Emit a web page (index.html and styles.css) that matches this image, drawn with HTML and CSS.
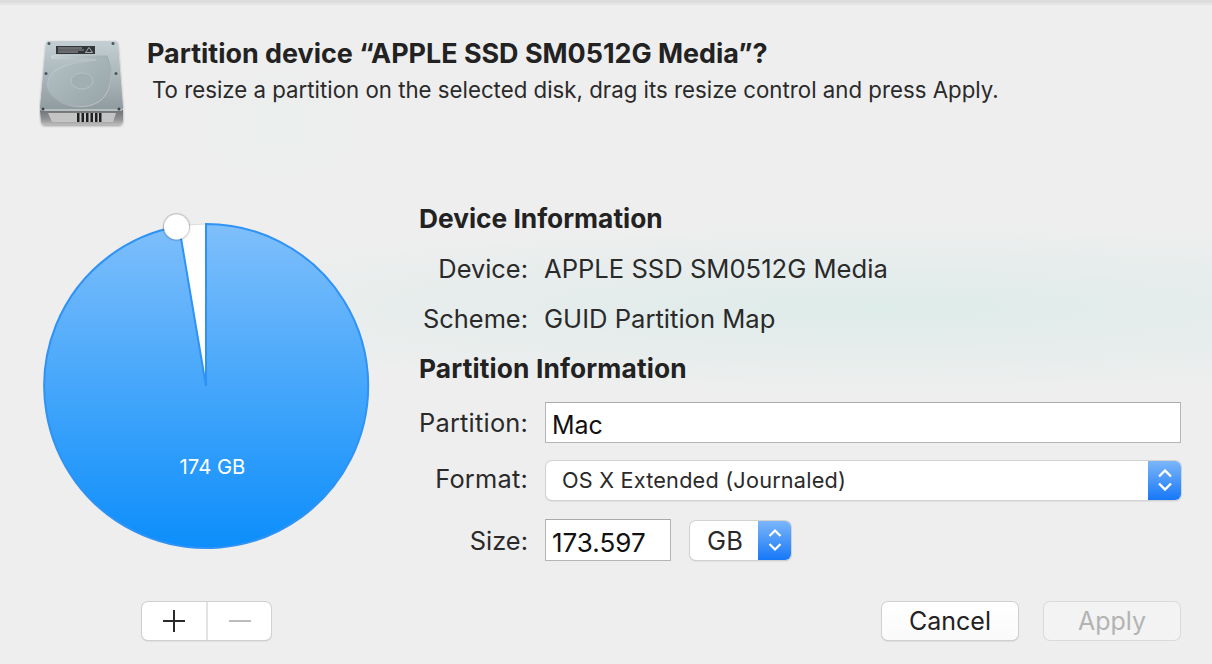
FILE: index.html
```html
<!DOCTYPE html>
<html lang="en">
<head>
<meta charset="utf-8">
<title>Partition device</title>
<link rel="stylesheet" href="styles.css">
</head>
<body>
<div class="dialog">
  <header class="head">
    <svg class="disk" width="90" height="92" viewBox="39 40 90 92">
      <defs>
        <linearGradient id="dtop" x1="0" y1="0" x2="0" y2="1">
          <stop offset="0" stop-color="#c3cfd3"/><stop offset="0.5" stop-color="#a9b6ba"/><stop offset="1" stop-color="#8f9a9e"/>
        </linearGradient>
        <linearGradient id="dfront" x1="0" y1="0" x2="0" y2="1">
          <stop offset="0" stop-color="#6f7274"/><stop offset="0.6" stop-color="#8f9192"/><stop offset="1" stop-color="#bdbdbd"/>
        </linearGradient>
        <linearGradient id="dplat" x1="0" y1="0" x2="1" y2="1">
          <stop offset="0" stop-color="#b4c1c5"/><stop offset="1" stop-color="#96a3a7"/>
        </linearGradient>
        <linearGradient id="dring" x1="0" y1="0" x2="1" y2="1">
          <stop offset="0" stop-color="#dfe6e7"/><stop offset="0.5" stop-color="#98a5a9"/><stop offset="1" stop-color="#d9cfcf"/>
        </linearGradient>
        <filter id="dshadow" x="-10%" y="-10%" width="120%" height="120%">
          <feDropShadow dx="0" dy="1" stdDeviation="0.800" flood-color="#000" flood-opacity="0.350"/>
        </filter>
      </defs>
      <g filter="url(#dshadow)">
        <path d="M40 110 L41 121 Q41.500 125 45 125 L119 125 Q122.500 125 123 121 L123 110 Z" fill="url(#dfront)"/>
        <path d="M48 113 L116 113 L113 122 L52 122 Z" fill="#c4c4c4"/>
        <path d="M46 43 Q46.500 41 49 41 L115 41 Q117.500 41 118 43 L123 107 Q123 111 119 111 L44 111 Q40 111 40 107 Z" fill="url(#dtop)"/>
      </g>
      <path d="M41 110 H122" stroke="#dde2e3" stroke-width="1"/>
      <path d="M107 56 L52 56 L52 58 L93 58 Q100 59 96 62 C80 62 66 64 56 70 C44 78 45 94 60 102 C76 110 98 108 106 94 C111 86 111 78 111 68 Z" fill="url(#dplat)" stroke="url(#dring)" stroke-width="1"/>
      <ellipse cx="82" cy="81" rx="11" ry="8" fill="#a1afb3" stroke="#b9c4c7" stroke-width="0.800"/>
      <rect x="56" y="46" width="39" height="8" fill="#33363a"/>
      <rect x="58" y="47.500" width="24" height="1" fill="#a2a4a6"/>
      <rect x="58" y="49.500" width="26" height="1" fill="#8e9092"/>
      <rect x="58" y="51.500" width="20" height="1" fill="#a2a4a6"/>
      <path d="M89 47.500 L92.500 52.500 L85.500 52.500 Z" fill="none" stroke="#c9cbcc" stroke-width="0.800"/>
      <circle cx="49" cy="43.500" r="1.500" fill="#4a565b"/>
      <circle cx="113" cy="43.500" r="1.500" fill="#4a565b"/>
      <circle cx="46" cy="73.500" r="1.500" fill="#4a565b"/>
      <circle cx="116" cy="73.500" r="1.500" fill="#4a565b"/>
      <circle cx="43" cy="109" r="1.500" fill="#39444a"/>
      <circle cx="119" cy="109" r="1.500" fill="#39444a"/>
      <g fill="#1f2022">
        <rect x="77" y="113" width="2.500" height="9"/><rect x="81.500" y="113" width="2.500" height="9"/><rect x="86" y="113" width="2.500" height="9"/><rect x="90.500" y="113" width="2.500" height="9"/><rect x="95" y="113" width="2.500" height="9"/><rect x="99" y="113" width="2.500" height="9"/>
      </g>
    </svg>
    <div class="head-text">
      <h1 class="title">Partition device “APPLE SSD SM0512G Media”?</h1>
      <p class="sub">To resize a partition on the selected disk, drag its resize control and press Apply.</p>
    </div>
  </header>
  <main class="body">
    <svg class="pie" width="332" height="344" viewBox="40 208 332 344">
      <defs>
        <linearGradient id="pieg" x1="0" y1="0" x2="0" y2="1">
          <stop offset="0" stop-color="#7fbffb"/><stop offset="1" stop-color="#0c8efb"/>
        </linearGradient>
        <filter id="hs" x="-30%" y="-30%" width="160%" height="160%">
          <feDropShadow dx="0" dy="0" stdDeviation="1.300" flood-color="#000" flood-opacity="0.700"/>
        </filter>
      </defs>
      <circle cx="206" cy="386" r="162" fill="#fff" stroke="#dcdcdc" stroke-width="1"/>
      <path d="M206 386 L206 224 A162 162 0 1 1 179 226.300 Z" fill="url(#pieg)" stroke="#2f92f5" stroke-width="2" stroke-linejoin="miter"/>
      <circle cx="176.500" cy="227" r="12.500" fill="#fff" filter="url(#hs)"/>
      <text class="pie-label" x="212.500" y="474" text-anchor="middle">174 GB</text>
    </svg>
    <section class="form">
      <h2 class="section first">Device Information</h2>
      <div class="row info"><span class="label">Device:</span><span class="value">APPLE SSD SM0512G Media</span></div>
      <div class="row info"><span class="label">Scheme:</span><span class="value">GUID Partition Map</span></div>
      <h2 class="section second">Partition Information</h2>
      <div class="row part"><label class="label">Partition:</label><div class="input wide">Mac</div></div>
      <div class="row fmt"><label class="label">Format:</label>
        <div class="select full"><span class="select-text">OS X Extended (Journaled)</span>
          <span class="stepper"><svg width="18" height="28" viewBox="0 0 18 28"><path d="M3 10.500 L9 4.500 L15 10.500 M3 17.500 L9 23.500 L15 17.500" fill="none" stroke="#fff" stroke-width="2.400"/></svg></span>
        </div>
      </div>
      <div class="row size"><label class="label">Size:</label>
        <div class="input num">173.597</div>
        <div class="select unit"><span class="select-text unit-text">GB</span>
          <span class="stepper"><svg width="16" height="28" viewBox="0 0 16 28"><path d="M2.500 10 L8 4.500 L13.500 10 M2.500 18 L8 23.500 L13.500 18" fill="none" stroke="#fff" stroke-width="2.200"/></svg></span>
        </div>
      </div>
    </section>
  </main>
  <footer class="foot">
    <div class="segment">
      <span class="seg"><svg width="24" height="24" viewBox="0 0 24 24"><path d="M1 12 H23 M12 1 V23" stroke="#2a2a2a" stroke-width="2"/></svg></span>
      <span class="seg"><svg width="24" height="24" viewBox="0 0 24 24"><path d="M1 12 H23" stroke="#bcbcbc" stroke-width="2"/></svg></span>
    </div>
    <div class="actions">
      <button class="btn">Cancel</button>
      <button class="btn off">Apply</button>
    </div>
  </footer>
</div>
</body>
</html>
```
FILE: styles.css
```css
* { box-sizing: border-box; }
html, body { margin: 0; padding: 0; }
body { width: 1212px; height: 664px; overflow: hidden; background: #ededed; font-family: "Inter", "Liberation Sans", sans-serif; color: #222; }
.dialog {
  width: 1212px; height: 664px; padding-top: 3px;
  background:
    linear-gradient(#dcdcdc 0, #dcdcdc 3px, #e6e6e6 3px, #e6e6e6 5px, rgba(238,238,238,0) 5px),
    radial-gradient(ellipse 780px 85px at 880px 308px, #deecea 0%, rgba(222,236,234,0) 100%),
    radial-gradient(ellipse 90px 60px at 280px 125px, #eaefed 0%, rgba(234,239,237,0) 100%),
    #eeeeee;
}
.head { display: flex; align-items: flex-start; height: 205px; padding: 37px 0 0 39px; }
.disk { flex: none; }
.head-text { margin: 0 0 0 19px; }
.title { margin: -2px 0 0 -1px; font-size: 26.900px; line-height: 30px; font-weight: 700; color: #222; white-space: nowrap; }
.sub { margin: 7px 0 0 4px; font-size: 22.250px; line-height: 30px; color: #2a2a2a; white-space: nowrap; }
.body { display: flex; height: 394px; padding-left: 40px; }
.pie { flex: none; margin-right: 47px; }
.pie-label { font-size: 20.300px; fill: #fff; font-family: "Inter", "Liberation Sans", sans-serif; }
.form { width: 762px; }
.section { margin: 0; font-size: 26.300px; line-height: 30px; font-weight: 700; color: #222; height: 30px; white-space: nowrap; }
.section.first { margin-top: -4px; }
.section.second { margin-top: 20px; letter-spacing: .15px; }
.row { display: flex; align-items: center; }
.label { width: 109px; text-align: right; font-size: 25.400px; color: #2a2a2a; margin-right: 17px; flex: none; white-space: nowrap; }
.part .label, .fmt .label { letter-spacing: .22px; }
.value { font-size: 25.600px; color: #2a2a2a; white-space: nowrap; margin-left: -1px; }
.info { height: 50px; padding-top: 18px; }
.part { margin-top: 18px; height: 41px; }
.input { background: #fff; border: 1px solid #b5b5b5; border-top-color: #aaa; font-size: 25px; line-height: 30px; color: #111; padding: 7px 6px 0; }
.wide { width: 636px; height: 41px; }
.fmt { margin-top: 17px; height: 40px; }
.fmt .label { margin-bottom: 3px; }
.select { display: flex; background: #fff; border-radius: 6px; box-shadow: 0 0 0 1px #d2d2d2, 0 1px 1.500px rgba(0,0,0,.25); overflow: hidden; }
.full { width: 635px; height: 39px; margin-left: 1px; }
.select-text { flex: 1; font-size: 21.700px; padding-left: 16px; line-height: 38px; color: #2a2a2a; white-space: nowrap; letter-spacing: .2px; }
.stepper { flex: none; width: 33px; display: flex; align-items: center; justify-content: center; background: linear-gradient(#7cb6f9, #1678f8); }
.size { margin-top: 19px; height: 42px; }
.num { width: 126px; height: 42px; margin-right: 19px; padding-top: 8px; font-size: 26px; }
.unit { width: 101px; height: 39px; }
.unit-text { font-size: 25.500px; padding-left: 17px; line-height: 39px; }
.foot { display: flex; justify-content: space-between; align-items: flex-start; padding: 0 32px 0 142px; height: 44px; }
.segment { display: flex; width: 129px; height: 38px; background: #fff; border-radius: 6px; box-shadow: 0 0 0 1px #d0d0d0, 0 1px 1.500px rgba(0,0,0,.25); }
.seg { flex: 1; display: flex; align-items: center; justify-content: center; }
.seg:first-child { flex: none; width: 66px; border-right: 2px solid #e3e3e3; }
.actions { display: flex; gap: 26px; }
.btn { width: 136px; height: 38px; padding: 0; border: 0; border-radius: 6px; background: linear-gradient(#fff, #fafafa); box-shadow: 0 0 0 1px #d0d0d0, 0 1px 1.500px rgba(0,0,0,.3); font: 400 25px "Inter", "Liberation Sans", sans-serif; color: #222; }
.btn.off { background: #f3f3f3; color: #b3b3b3; box-shadow: 0 0 0 1px #dadada; }
```
